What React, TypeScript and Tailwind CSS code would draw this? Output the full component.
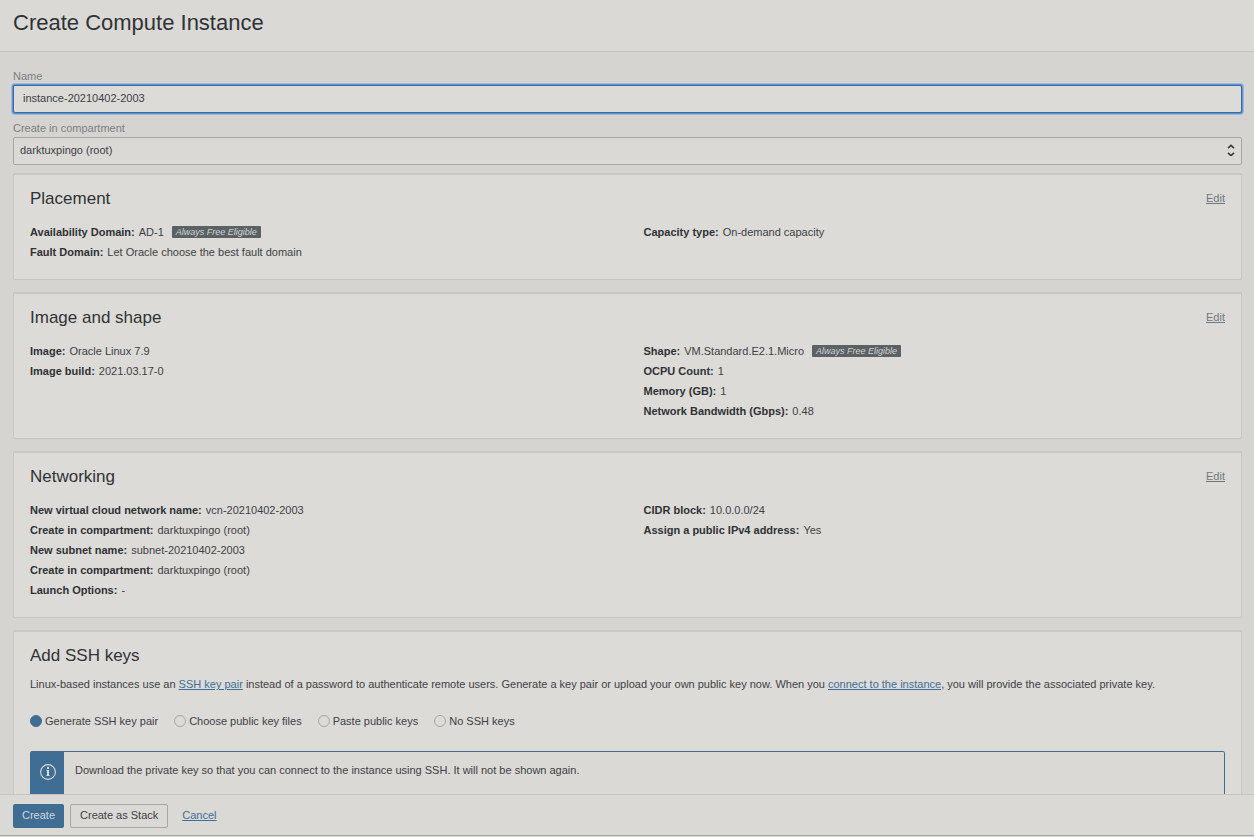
import type { ReactNode } from "react";

type Detail = { label: string; value: string; freeTier?: boolean };

function FreeTierBadge() {
  return (
    <span className="ml-2 rounded-[1px] bg-[#5a6266] px-1 text-[9px] leading-3 text-[#d4d3cf] italic">
      Always Free Eligible
    </span>
  );
}

function DetailList({ items }: { items: Detail[] }) {
  return (
    <dl>
      {items.map((item, index) => (
        <div key={index} className="flex items-center leading-5">
          <dt className="mr-1 font-bold text-[#2f3235]">{item.label}:</dt>
          <dd className="flex items-center">
            {item.value}
            {item.freeTier && <FreeTierBadge />}
          </dd>
        </div>
      ))}
    </dl>
  );
}

function Card({ title, editable, children }: { title: string; editable?: boolean; children: ReactNode }) {
  return (
    <section className="mb-3 rounded-[2px] border border-t-2 border-[#c8c7c3] bg-[#dcdbd7] px-4 pt-3 pb-[17px]">
      <div className="flex items-start justify-between">
        <h2 className="text-[17px] leading-6 text-[#303336]">{title}</h2>
        {editable && (
          <a href="#" aria-label={`Edit ${title}`} className="leading-[22px] text-[#6f7880] underline">
            Edit
          </a>
        )}
      </div>
      {children}
    </section>
  );
}

function DetailCard({ title, left, right }: { title: string; left: Detail[]; right: Detail[] }) {
  return (
    <Card title={title} editable>
      <div className="mt-[11px] grid grid-cols-2 gap-8">
        <DetailList items={left} />
        <DetailList items={right} />
      </div>
    </Card>
  );
}

const keyOptions = ["Generate SSH key pair", "Choose public key files", "Paste public keys", "No SSH keys"];

export default function App() {
  return (
    <div className="flex h-screen flex-col bg-[#dad9d5] font-['Liberation_Sans',Arial,sans-serif] text-[11px] leading-4 text-[#3e4144]">
      <header className="shrink-0 border-b border-[#c6c5c1] px-[13px] pt-[9px] pb-3.5">
        <h1 className="text-[22px] leading-7 text-[#303336]">Create Compute Instance</h1>
      </header>

      <main className="min-h-0 flex-1 overflow-y-auto bg-[#d5d4d0] pt-4 pr-3 pl-[13px] [scrollbar-width:none]">
        <div className="mb-[7px] flex flex-col">
          <label htmlFor="name" className="mb-px text-[#7d7f80]">
            Name
          </label>
          <input
            id="name"
            type="text"
            defaultValue="instance-20210402-2003"
            className="h-7 rounded-[2px] border border-[#3b6c96] bg-[#dcdbd7] px-[9px] pb-0.5 text-[#3e4144] shadow-[0_0_0_1px_#5891dc,0_0_0_2px_#a3b8d6] outline-none"
          />
        </div>

        <div className="mb-2 flex flex-col">
          <label htmlFor="compartment" className="mb-px text-[#7d7f80]">
            Create in compartment
          </label>
          <div className="relative">
            <select
              id="compartment"
              className="block h-7 w-full appearance-none rounded-[2px] border border-[#a9a7a3] bg-[#dad9d5] px-1.5 pb-0.5 text-[#3e4144]"
            >
              <option>darktuxpingo (root)</option>
            </select>
            <svg
              aria-hidden="true"
              viewBox="0 0 8 12"
              className="pointer-events-none absolute top-[7px] right-[7px] h-3 w-2"
              fill="none"
              stroke="#3a3c3e"
              strokeWidth="1.7"
            >
              <path d="M1 4.2 4 1.4l3 2.8M1 8.8l3 2.8 3-2.8" />
            </svg>
          </div>
        </div>

        <DetailCard
          title="Placement"
          left={[
            { label: "Availability Domain", value: "AD-1", freeTier: true },
            { label: "Fault Domain", value: "Let Oracle choose the best fault domain" },
          ]}
          right={[{ label: "Capacity type", value: "On-demand capacity" }]}
        />
        <DetailCard
          title="Image and shape"
          left={[
            { label: "Image", value: "Oracle Linux 7.9" },
            { label: "Image build", value: "2021.03.17-0" },
          ]}
          right={[
            { label: "Shape", value: "VM.Standard.E2.1.Micro", freeTier: true },
            { label: "OCPU Count", value: "1" },
            { label: "Memory (GB)", value: "1" },
            { label: "Network Bandwidth (Gbps)", value: "0.48" },
          ]}
        />
        <DetailCard
          title="Networking"
          left={[
            { label: "New virtual cloud network name", value: "vcn-20210402-2003" },
            { label: "Create in compartment", value: "darktuxpingo (root)" },
            { label: "New subnet name", value: "subnet-20210402-2003" },
            { label: "Create in compartment", value: "darktuxpingo (root)" },
            { label: "Launch Options", value: "-" },
          ]}
          right={[
            { label: "CIDR block", value: "10.0.0.0/24" },
            { label: "Assign a public IPv4 address", value: "Yes" },
          ]}
        />

        <Card title="Add SSH keys">
          <p className="mt-2">
            Linux-based instances use an{" "}
            <a href="#" className="text-[#3f6f98] underline">
              SSH key pair
            </a>{" "}
            instead of a password to authenticate remote users. Generate a key pair or upload your own public key now.
            When you{" "}
            <a href="#" className="text-[#3f6f98] underline">
              connect to the instance
            </a>
            , you will provide the associated private key.
          </p>
          <div role="radiogroup" aria-label="SSH keys" className="mt-[21px] mb-[22px] flex flex-wrap gap-x-4">
            {keyOptions.map((option, index) => (
              <label key={option} className="flex items-center gap-[3px]">
                <input
                  type="radio"
                  name="ssh-key"
                  defaultChecked={index === 0}
                  className="size-3 appearance-none rounded-full border border-[#a9a8a4] checked:border-[#3f6d94] checked:bg-[#3f6d94]"
                />
                {option}
              </label>
            ))}
          </div>
          <div className="flex min-h-16 rounded-[2px] border border-[#3f6d94] bg-[#dad9d5]">
            <div className="flex w-[33px] shrink-0 justify-center bg-[#3f6d94] pt-3">
              <svg aria-hidden="true" viewBox="0 0 16 16" className="size-4" fill="none" stroke="#dcdbd7">
                <circle cx="8" cy="8" r="7.4" strokeWidth="1.1" />
                <path d="M8 3v2M8 6v6" strokeWidth="2" />
                <path d="M6.5 6.5H8M6.5 11.5h3" strokeWidth="1" />
              </svg>
            </div>
            <p className="px-[11px] pt-[10px]">
              Download the private key so that you can connect to the instance using SSH. It will not be shown again.
            </p>
          </div>
        </Card>
      </main>

      <footer className="mb-px flex shrink-0 items-start border-t border-b border-t-[#c6c5c1] border-b-[#a5a4a1] px-[13px] pt-[9px] pb-[7px]">
        <button type="button" className="mr-1.5 h-6 rounded-[2px] bg-[#3f6d94] px-[9px] pb-0.5 text-[#d0d6da]">
          Create
        </button>
        <button type="button" className="mr-3.5 h-6 rounded-[2px] border border-[#a9a7a3] px-[9px] pb-0.5 text-[#3e4144]">
          Create as Stack
        </button>
        <a href="#" className="leading-[22px] text-[#3f6f98] underline">
          Cancel
        </a>
      </footer>
    </div>
  );
}
